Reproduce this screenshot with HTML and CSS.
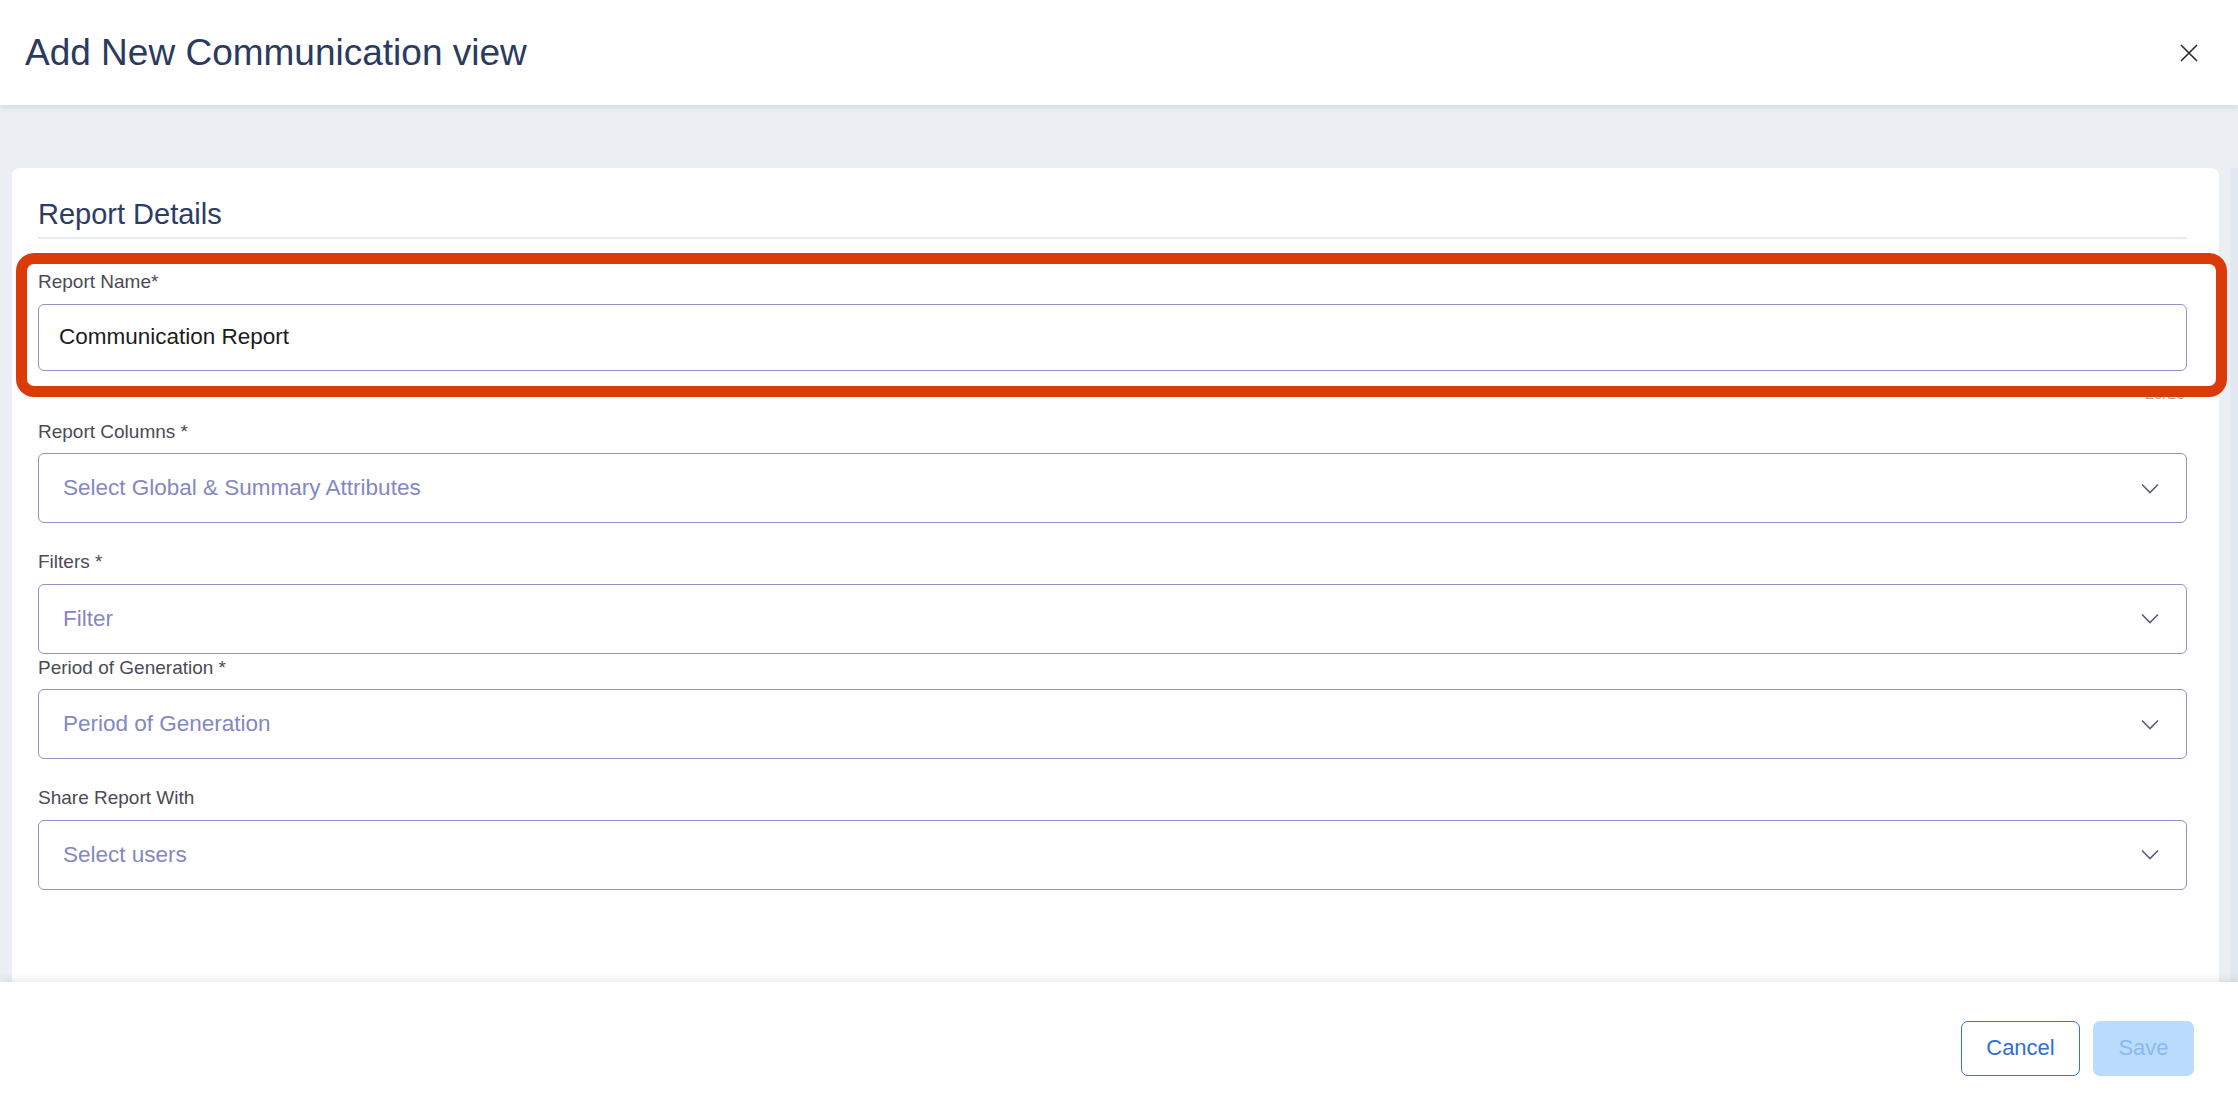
FILE: index.html
```html
<!DOCTYPE html>
<html lang="en">
<head>
<meta charset="utf-8">
<title>Add New Communication view</title>
<link rel="stylesheet" href="styles.css">
</head>
<body>
<header class="modal-header">
  <h1 class="modal-title">Add New Communication view</h1>
  <button class="close-btn" aria-label="Close">
    <svg width="18" height="18" viewBox="0 0 18 18"><path d="M1 1 L17 17 M17 1 L1 17" stroke="#2a2a2a" stroke-width="1.6" fill="none"/></svg>
  </button>
</header>
<main class="modal-body">
  <section class="card">
    <h2 class="section-title">Report Details</h2>
    <div class="field field-name">
      <label class="field-label">Report Name*</label>
      <div class="text-input">Communication Report</div>
      <div class="counter">20/20</div>
      <div class="highlight"></div>
    </div>
    <div class="field gap-lg">
      <label class="field-label">Report Columns *</label>
      <div class="select"><span class="placeholder">Select Global &amp; Summary Attributes</span><svg class="chev" width="18" height="11" viewBox="0 0 18 11"><path d="M1 1.5 L9 9.5 L17 1.5" stroke="#5b5f78" stroke-width="1.6" fill="none"/></svg></div>
    </div>
    <div class="field gap-sm">
      <label class="field-label">Filters *</label>
      <div class="select"><span class="placeholder">Filter</span><svg class="chev" width="18" height="11" viewBox="0 0 18 11"><path d="M1 1.5 L9 9.5 L17 1.5" stroke="#5b5f78" stroke-width="1.6" fill="none"/></svg></div>
    </div>
    <div class="field gap-lg">
      <label class="field-label">Period of Generation *</label>
      <div class="select"><span class="placeholder">Period of Generation</span><svg class="chev" width="18" height="11" viewBox="0 0 18 11"><path d="M1 1.5 L9 9.5 L17 1.5" stroke="#5b5f78" stroke-width="1.6" fill="none"/></svg></div>
    </div>
    <div class="field">
      <label class="field-label">Share Report With</label>
      <div class="select"><span class="placeholder">Select users</span><svg class="chev" width="18" height="11" viewBox="0 0 18 11"><path d="M1 1.5 L9 9.5 L17 1.5" stroke="#5b5f78" stroke-width="1.6" fill="none"/></svg></div>
    </div>
  </section>
  <div class="scroll-track"></div>
</main>
<footer class="modal-footer">
  <button class="btn btn-outline">Cancel</button>
  <button class="btn btn-disabled">Save</button>
</footer>
</body>
</html>
```

FILE: styles.css
```css
* { box-sizing: border-box; }
html, body { height: 100%; }
body {
  margin: 0;
  font-family: "Liberation Sans", Arial, sans-serif;
  display: flex;
  flex-direction: column;
  background: #ffffff;
  overflow: hidden;
}
.modal-header {
  height: 105px;
  flex: 0 0 105px;
  display: flex;
  align-items: center;
  justify-content: space-between;
  padding: 0 40px 0 25px;
  background: #ffffff;
  box-shadow: 0 2px 6px rgba(30, 40, 60, 0.12);
  position: relative;
  z-index: 2;
}
.modal-title {
  margin: 0;
  font-size: 37px;
  font-weight: normal;
  color: #2b3a60;
  line-height: 1;
}
.close-btn {
  border: 0;
  background: none;
  padding: 0;
  width: 18px;
  height: 18px;
  display: flex;
}
.modal-body {
  flex: 1;
  display: flex;
  background: #ebeff4;
  padding: 63px 0 0 12px;
  min-height: 0;
}
.card {
  flex: 1;
  margin-right: 11px;
  background: #ffffff;
  border-radius: 8px 8px 0 0;
  padding: 29px 32px 0 26px;
}
.scroll-track {
  width: 8px;
  flex: 0 0 8px;
  background: #e2e8f2;
}
.section-title {
  margin: 0;
  font-size: 29px;
  line-height: 34px;
  font-weight: normal;
  color: #2c3d63;
  padding-bottom: 6px;
  border-bottom: 2px solid #e5e8ec;
}
.field {
  position: relative;
  display: flex;
  flex-direction: column;
}
.field-name { margin-top: 32px; }
.gap-lg { margin-bottom: 28px; }
.gap-sm { margin-bottom: 3px; }
.field-label {
  font-size: 19px;
  line-height: 22px;
  color: #4a4b55;
  margin-bottom: 10.5px;
}
.text-input {
  height: 67px;
  border: 1.5px solid #8e94c4;
  border-radius: 6px;
  display: flex;
  align-items: center;
  padding-left: 20px;
  font-size: 22.5px;
  color: #1c1c22;
}
.counter {
  margin-top: 13px;
  margin-bottom: 17px;
  text-align: right;
  font-size: 16px;
  line-height: 20px;
  color: #a8a8b0;
  padding-right: 2px;
}
.highlight {
  position: absolute;
  top: -18px;
  left: -22px;
  right: -40px;
  height: 144px;
  border: 11px solid #db3a09;
  border-radius: 18px;
  pointer-events: none;
}
.select {
  height: 70px;
  border: 1.5px solid #8e94c4;
  border-radius: 6px;
  display: flex;
  align-items: center;
  justify-content: space-between;
  padding: 0 27px 0 24px;
}
.placeholder {
  font-size: 22.5px;
  color: #8388c2;
}
.chev { display: block; }
.modal-footer {
  flex: 0 0 132px;
  height: 132px;
  display: flex;
  justify-content: flex-end;
  align-items: center;
  gap: 13px;
  padding-right: 44px;
  background: #ffffff;
  box-shadow: 0 -2px 8px rgba(30, 40, 60, 0.10);
  position: relative;
  z-index: 2;
}
.btn {
  height: 55px;
  border-radius: 7px;
  font-family: "Liberation Sans", Arial, sans-serif;
  font-size: 22px;
  padding: 0;
}
.btn-outline {
  width: 119px;
  background: #ffffff;
  border: 1.5px solid #3574d4;
  color: #2e6fcf;
}
.btn-disabled {
  width: 101px;
  background: #b9dcfd;
  border: 0;
  color: #8bb9ef;
}
```
